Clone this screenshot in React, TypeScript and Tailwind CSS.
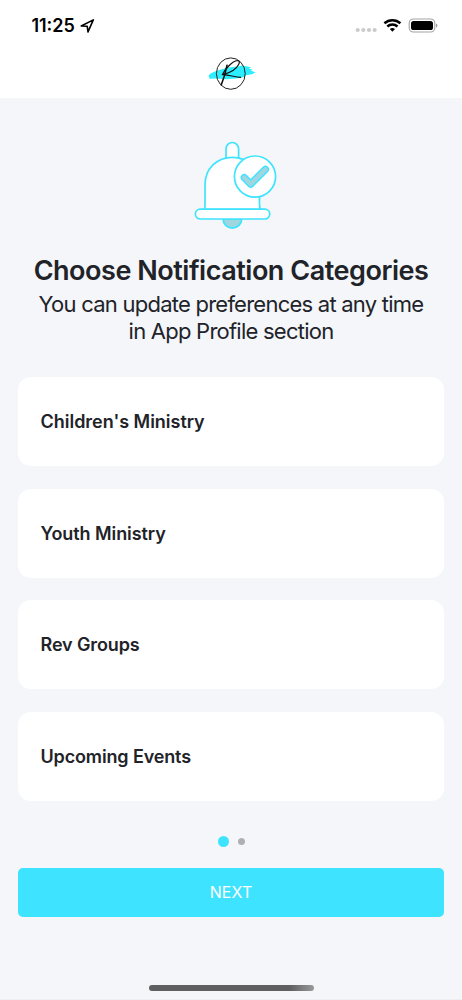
const categories = [
  { name: "Children's Ministry", tracking: "tracking-[-0.02px]" },
  { name: "Youth Ministry", tracking: "tracking-[-0.08px]" },
  { name: "Rev Groups", tracking: "tracking-[-0.12px]" },
  { name: "Upcoming Events", tracking: "tracking-[-0.14px]" },
];

function StatusBar() {
  return (
    <div className="flex h-[50px] items-center justify-between pl-[31.4px] pr-[24px]">
      <div className="flex items-center gap-[5px]">
        <span className="pt-[2px] text-[18px] leading-[50px] font-semibold text-black">11:25</span>
        <svg className="size-4" viewBox="0 0 16 16" fill="none">
          <path d="M1.2 9 13.3 2.9 8 14.9 7.2 9.2Z" stroke="#000" strokeWidth="1.6" strokeLinejoin="round" />
        </svg>
      </div>
      <svg width="84" height="20" viewBox="0 0 84 20">
        <g fill="#cbcbcb">
          <circle cx="3.7" cy="15" r="2.1" />
          <circle cx="9.3" cy="15" r="2.1" />
          <circle cx="15" cy="15" r="2.1" />
          <circle cx="20.6" cy="15" r="2.1" />
        </g>
        <g fill="none" stroke="#000" strokeWidth="2.5">
          <path d="M30.4 8.2a12.1 12.1 0 0 1 16 0" />
          <path d="M33.3 11.5a7.6 7.6 0 0 1 10.2 0" />
        </g>
        <path d="M35.8 14a4 4 0 0 1 5.2 0L38.4 16.8Z" fill="#000" />
        <rect x="55.2" y="4" width="25.6" height="13" rx="4.2" fill="none" stroke="#a3a3a3" strokeWidth="1.1" />
        <rect x="57" y="5.9" width="22" height="9.2" rx="2.6" fill="#000" />
        <path d="M82 8.4c1.9.7 1.9 3.5 0 4.2Z" fill="#999" />
      </svg>
    </div>
  );
}

function Logo() {
  return (
    <svg width="50" height="36" viewBox="0 0 50 36" fill="none">
      <path d="M2.7 20.8 4.5 18.4 9 16.4 15 14.6 22 12.6 32 11.6 36 10.4 45 12.2 43 13.8 46.5 14.6 45 15.8 49.6 17.2 46 19.2 40 20.2 38 22 30 23.6 20 24.3 10 23.4 3.5 23.8Z" fill="#2deeff" />
      <ellipse cx="24.8" cy="18.6" rx="14.4" ry="15.7" stroke="#222" strokeWidth="1" />
      <path d="M21 10.3C19.8 16 17.6 24 15.3 29.7" stroke="#111" strokeWidth="1.6" strokeLinecap="round" />
      <path d="M16.3 19.7C18.5 15 26 6 31.5 5.5 36 5.6 31.5 12.6 27 15.4 23.5 17.5 20.5 18.6 17.3 19.6 23 20 29 22 34.6 22.4" stroke="#111" strokeWidth="1.2" strokeLinecap="round" strokeLinejoin="round" />
    </svg>
  );
}

function Bell() {
  return (
    <svg width="82" height="90" viewBox="4 7 82 90" fill="#fff" stroke="#3ee4ff" strokeWidth="1.7" overflow="visible">
      <path d="M36 27V16.8a6.3 6.3 0 0 1 12.6 0V27" />
      <path d="M14 77.5c1.2-1.5 1-3 1-5V53C15 36.5 27 25.3 42.5 25.3S69.5 37 69.5 53v19.5c0 2 .2 3.5 1.3 5Z" />
      <path d="M33 86.7h18.7a9.3 9.3 0 0 1-18.7 0Z" fill="#a0d6df" />
      <rect x="5.4" y="77.2" width="74.3" height="9.8" rx="4.9" />
      <circle cx="65" cy="44.6" r="20.6" />
      <path d="m54.3 45.6 6.4 6.5L75.4 37.3" fill="none" strokeWidth="7.4" strokeLinecap="round" strokeLinejoin="round" />
      <path d="m54.3 45.6 6.4 6.5L75.4 37.3" fill="none" stroke="#a0d6df" strokeWidth="4.5" strokeLinecap="round" strokeLinejoin="round" />
    </svg>
  );
}

export default function App() {
  return (
    <div className="flex h-[1000px] w-full flex-col border-b border-[#eeefef] bg-[#f4f6fa] font-['Inter',sans-serif] text-[#212328]">
      <header className="h-[98px] bg-white">
        <StatusBar />
        <div className="flex justify-center pt-[5px]"><Logo /></div>
      </header>
      <main className="flex flex-col px-[18px]">
        <div className="flex h-[134px] justify-center pt-[40.7px] pl-[8px]"><Bell /></div>
        <h1 className="mt-[22px] text-center text-[27px] leading-[34px] font-semibold tracking-[-0.47px] whitespace-nowrap">Choose Notification Categories</h1>
        <p className="mt-[2.5px] text-center text-[22px] leading-[27px] tracking-[-0.76px] whitespace-nowrap">
          You can update preferences at any time<br />in App Profile section
        </p>
        <div className="mt-[32.8px] flex flex-col gap-[22.6px]">
          {categories.map(({ name, tracking }) => (
            <div key={name} className="flex h-[89px] items-center rounded-[13px] bg-white px-[22.5px] text-[18px] font-semibold">
              <span className={tracking}>{name}</span>
            </div>
          ))}
        </div>
        <div className="mt-[34.5px] flex h-[12px] items-center justify-center gap-[8.5px]">
          <span className="size-[11.5px] rounded-full bg-[#3ee4ff]" />
          <span className="size-[7px] rounded-full bg-[#b0b0b2]" />
        </div>
        <button className="mt-[20.5px] h-[49px] rounded-[5px] bg-[#3ee4ff] pb-[2px] text-[16px] tracking-[0.1px] text-white">NEXT</button>
      </main>
      <div className="mx-auto mt-auto mb-[8px] h-[6px] w-[165px] rounded-full bg-linear-to-r from-[#5f5f62] from-85% to-[#9a9a9c]" />
    </div>
  );
}
